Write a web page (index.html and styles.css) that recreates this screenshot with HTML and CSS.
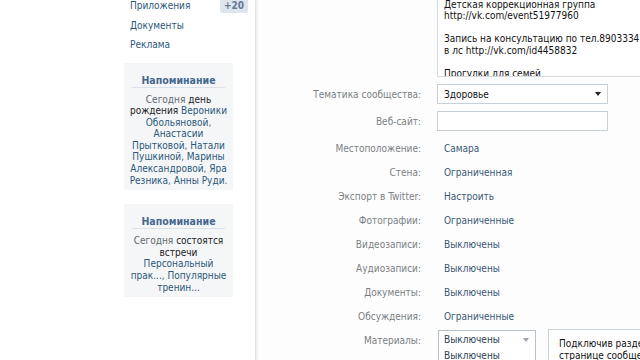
FILE: index.html
```html
<!DOCTYPE html>
<html lang="ru">
<head>
    <meta charset="UTF-8">
    <title>Управление сообществом</title>
    <link rel="stylesheet" href="styles.css">
</head>
<body>

<div class="page">
    <aside class="side">
        <nav class="menu">
            <a class="menu-item" href="#apps"><span>Приложения</span><span class="badge">+20</span></a>
            <a class="menu-item" href="#docs">Документы</a>
            <a class="menu-item" href="#ads">Реклама</a>
        </nav>

        <div class="remind">
            <div class="remind-title">Напоминание</div>
            <div class="remind-text">
                Сегодня <b>день</b><br>
                <b>рождения</b> <a href="#">Вероники</a><br>
                <a href="#">Обольяновой</a>,<br>
                <a href="#">Анастасии</a><br>
                <a href="#">Прытковой</a>, <a href="#">Натали</a><br>
                <a href="#">Пушкиной</a>, <a href="#">Марины</a><br>
                <a href="#">Александровой</a>, <a href="#">Яра</a><br>
                <a href="#">Резника</a>, <a href="#">Анны Руди</a>.
            </div>
        </div>

        <div class="remind">
            <div class="remind-title">Напоминание</div>
            <div class="remind-text">
                Сегодня <b>состоятся</b><br>
                <b>встречи</b><br>
                <a href="#">Персональный</a><br>
                <a href="#">прак...</a>, <a href="#">Популярные</a><br>
                <a href="#">тренин...</a>
            </div>
        </div>
    </aside>

    <main class="content">
        <div class="form">
            <div class="row row-desc">
                <div class="label"></div>
                <div class="textarea">
                    <div class="textarea-text">Занятия для детей и родителей
Детская коррекционная группа
http://vk.com/event51977960

Запись на консультацию по тел.89033341
в лс http://vk.com/id4458832

Прогулки для семей
с детьми</div>
                </div>
            </div>

            <div class="row row-input">
                <div class="label">Тематика сообщества:</div>
                <div class="select select-wide"><span>Здоровье</span><span class="arrow"></span></div>
            </div>

            <div class="row row-input">
                <div class="label">Веб-сайт:</div>
                <div class="input"></div>
            </div>

            <div class="rows">
                <div class="row"><div class="label">Местоположение:</div><a class="value" href="#">Самара</a></div>
                <div class="row"><div class="label">Стена:</div><a class="value" href="#">Ограниченная</a></div>
                <div class="row"><div class="label">Экспорт в Twitter:</div><a class="value" href="#">Настроить</a></div>
                <div class="row"><div class="label">Фотографии:</div><a class="value" href="#">Ограниченные</a></div>
                <div class="row"><div class="label">Видеозаписи:</div><a class="value" href="#">Выключены</a></div>
                <div class="row"><div class="label">Аудиозаписи:</div><a class="value" href="#">Выключены</a></div>
                <div class="row"><div class="label">Документы:</div><a class="value" href="#">Выключены</a></div>
                <div class="row"><div class="label">Обсуждения:</div><a class="value" href="#">Ограниченные</a></div>
                <div class="row row-open">
                    <div class="label">Материалы:</div>
                    <div class="dropdown">
                        <div class="select select-small"><span>Выключены</span><span class="arrow arrow-light"></span></div>
                        <div class="options">
                            <div class="option">Выключены</div>
                            <div class="option">Открытые</div>
                        </div>
                    </div>
                    <div class="hint">Подключив раздел материалов, на странице сообщества появится блок</div>
                </div>
                <div class="row row-last"><div class="label">Программы:</div></div>
            </div>
        </div>
    </main>
</div>

</body>
</html>
```

FILE: styles.css
```css
body {
    margin: 0;
    background-color: #fff;
    font-family: "DejaVu Sans Condensed", "DejaVu Sans", sans-serif;
    font-size: 10px;
    overflow: hidden;
}
a {
    color: #2b587a;
    text-decoration: none;
}
.page {
    display: flex;
    height: 360px;
}
.side {
    width: 131px;
    padding-left: 124px;
    border-right: 1px solid #e4e6e9;
    box-shadow: 2px 0 0 #f1f2f4;
    flex-shrink: 0;
}
.menu {
    margin-top: -4px;
}
.menu-item {
    display: flex;
    justify-content: space-between;
    align-items: center;
    width: 118px;
    height: 19.5px;
    padding-left: 6px;
}
.badge {
    background-color: #dee5ec;
    color: #5b7a99;
    font-weight: bold;
    padding: 2px 4px;
    border-radius: 2px;
}
.remind {
    width: 109px;
    margin-top: 8px;
    padding: 10px 0 4px;
    background-color: #f5f6f8;
    text-align: center;
    box-sizing: border-box;
}
.remind + .remind {
    margin-top: 14px;
}
.remind-title {
    color: #45688e;
    font-weight: bold;
    font-size: 10.5px;
    line-height: 14px;
    margin: 0 8px 6px;
    border-bottom: 1px solid #dae1e8;
}
.remind-text {
    color: #5f6870;
    line-height: 11.6px;
    white-space: nowrap;
}
.remind-text b {
    color: #222;
    font-weight: normal;
}
.content {
    flex: 1;
    margin-left: 2px;
    background-color: #fdfdfd;
}
.form {
    width: 600px;
}
.row {
    display: flex;
    align-items: center;
    height: 24px;
}
.label {
    width: 163px;
    padding-right: 16px;
    text-align: right;
    color: #7b7f84;
    white-space: nowrap;
    flex-shrink: 0;
}
.value {
    padding-left: 7px;
    color: #3a5775;
}
.row-desc {
    height: auto;
    align-items: flex-start;
}
.textarea {
    width: 400px;
    height: 87px;
    margin-top: -10px;
    border: 1px solid #d6dbe0;
    background-color: #fff;
    box-sizing: border-box;
    overflow: hidden;
}
.textarea-text {
    margin-top: -4px;
    padding-left: 6px;
    white-space: pre;
    line-height: 11.5px;
    color: #111;
}
.row-input {
    height: 20px;
    margin-top: 7px;
}
.select,
.input {
    height: 20px;
    border: 1px solid #c7cfd8;
    background-color: #fff;
    box-sizing: border-box;
    display: flex;
    align-items: center;
    justify-content: space-between;
    padding: 0 6px;
    color: #111;
}
.select-wide,
.input {
    width: 171px;
}
.arrow {
    width: 0;
    height: 0;
    border-left: 3.5px solid transparent;
    border-right: 3.5px solid transparent;
    border-top: 4px solid #222;
}
.arrow-light {
    border-top-color: #9aa4ae;
}
.rows {
    margin-top: 5px;
}
.row-open {
    position: relative;
    z-index: 1;
}
.row-last {
    margin-top: 2px;
}
.dropdown {
    position: relative;
    margin-left: 1px;
    margin-top: -1px;
}
.select-small {
    width: 98px;
    height: 19px;
    border-color: #b5c1cd;
    padding-left: 5px;
    color: #2b3f55;
}
.options {
    position: absolute;
    top: 18px;
    left: 0;
    width: 98px;
    box-sizing: border-box;
    background-color: #fff;
    border: 1px solid #b5c1cd;
    border-top: none;
}
.option {
    height: 16px;
    line-height: 16px;
    padding-left: 5px;
    color: #2b3f55;
}
.hint {
    position: absolute;
    left: 290px;
    top: 1px;
    width: 200px;
    padding: 8px 10px;
    background-color: #fff;
    border: 1px solid #c9d2db;
    color: #111;
    line-height: 11.5px;
}
```
